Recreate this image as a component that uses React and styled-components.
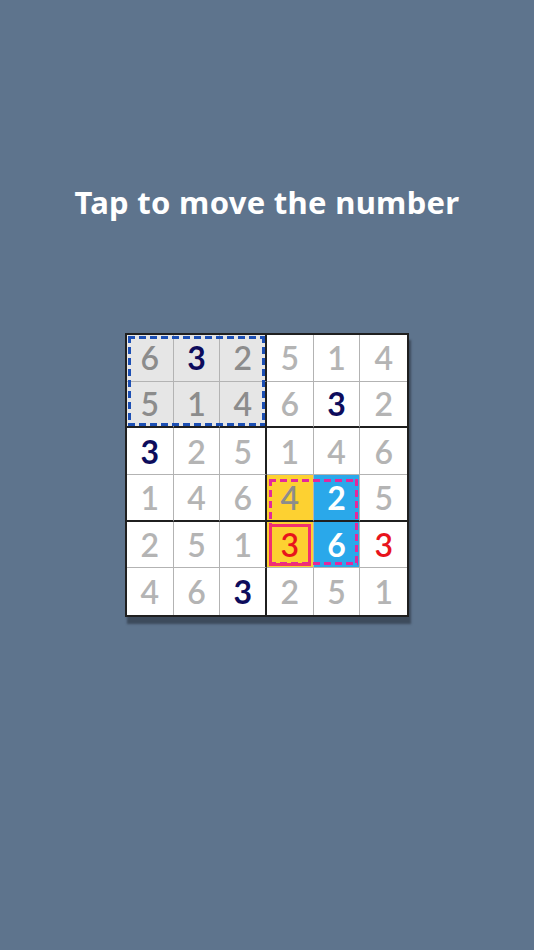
import React from "react";
import styled, { createGlobalStyle, css } from "styled-components";

const GlobalStyle = createGlobalStyle`
  html, body {
    margin: 0;
    padding: 0;
    background: #5e748d;
  }
  body {
    font-family: "Lato", "Liberation Sans", sans-serif;
  }
`;

const Page = styled.div`
  min-height: 950px;
  display: flex;
  flex-direction: column;
  align-items: center;
  padding-top: 182px;
  box-sizing: border-box;
`;

const Title = styled.h1`
  margin: 0;
  font-family: "Noto Sans", "Lato", sans-serif;
  font-weight: 700;
  font-size: 31px;
  line-height: 40px;
  color: #ffffff;
  letter-spacing: 0.3px;
`;

const Board = styled.div`
  margin-top: 111px;
  width: 284px;
  height: 284px;
  box-sizing: border-box;
  border: 2px solid #1f1f1f;
  background: #ffffff;
  display: grid;
  grid-template-columns: repeat(6, 1fr);
  grid-template-rows: repeat(6, 1fr);
  box-shadow: 2px 7px 2px rgba(35, 42, 52, 0.55);
`;

const toneColors = {
  light: "#b4b4b4",
  muted: "#8c8c8c",
  navy: "#0d0c5c",
  red: "#e8141c",
  white: "#ffffff",
};

const fills = {
  none: "#ffffff",
  shade: "#e6e6e6",
  yellow: "#fdd131",
  blue: "#2aa8ea",
};

const Cell = styled.div`
  grid-row: ${(p) => p.$row + 1};
  grid-column: ${(p) => p.$col + 1};
  box-sizing: border-box;
  display: flex;
  align-items: center;
  justify-content: center;
  font-size: 32px;
  line-height: 1;
  padding-top: 1px;
  color: ${(p) => toneColors[p.$tone]};
  font-weight: ${(p) => (p.$tone === "navy" || p.$tone === "white" ? 700 : 600)};
  background: ${(p) => fills[p.$fill]};
  border-right: ${(p) =>
    p.$col === 5 ? "none" : p.$col === 2 ? "2px solid #1f1f1f" : "1px solid #b3b3b3"};
  border-bottom: ${(p) =>
    p.$row === 5
      ? "none"
      : p.$row === 1 || p.$row === 3
      ? "2px solid #1f1f1f"
      : "1px solid #b3b3b3"};
`;

const dashed = (color) => css`
  background:
    linear-gradient(90deg, ${color} 62%, transparent 0) top left / 11px 3px repeat-x,
    linear-gradient(90deg, ${color} 62%, transparent 0) bottom left / 11px 3px repeat-x,
    linear-gradient(180deg, ${color} 62%, transparent 0) top left / 3px 11px repeat-y,
    linear-gradient(180deg, ${color} 62%, transparent 0) top right / 3px 11px repeat-y;
`;

/* Selection markers laid over the cells they span */
const Marker = styled.div`
  grid-row: ${(p) => p.$rows};
  grid-column: ${(p) => p.$cols};
  margin: ${(p) => p.$inset};
  pointer-events: none;
  z-index: 1;
  ${(p) => (p.$dashed ? dashed(p.$color) : css`border: 3px solid ${p.$color};`)}
`;

const rows = [
  [6, 3, 2, 5, 1, 4],
  [5, 1, 4, 6, 3, 2],
  [3, 2, 5, 1, 4, 6],
  [1, 4, 6, 4, 2, 5],
  [2, 5, 1, 3, 6, 3],
  [4, 6, 3, 2, 5, 1],
];

const special = {
  "0-0": ["muted", "shade"],
  "0-1": ["navy", "shade"],
  "0-2": ["muted", "shade"],
  "1-0": ["muted", "shade"],
  "1-1": ["muted", "shade"],
  "1-2": ["muted", "shade"],
  "1-4": ["navy", "none"],
  "2-0": ["navy", "none"],
  "3-3": ["muted", "yellow"],
  "3-4": ["white", "blue"],
  "4-3": ["red", "yellow"],
  "4-4": ["white", "blue"],
  "4-5": ["red", "none"],
  "5-2": ["navy", "none"],
};

export default function App() {
  return (
    <>
      <GlobalStyle />
      <Page>
        <Title>Tap to move the number</Title>
        <Board>
          {rows.map((row, r) =>
            row.map((n, c) => {
              const [tone, fill] = special[`${r}-${c}`] || ["light", "none"];
              return (
                <Cell key={`${r}-${c}`} $row={r} $col={c} $tone={tone} $fill={fill}>
                  {n}
                </Cell>
              );
            })
          )}
          <Marker $rows="1 / 3" $cols="1 / 4" $inset="1px 2px 2px 1px" $dashed $color="#1c4fb4" />
          <Marker $rows="4 / 6" $cols="4 / 6" $inset="4px 2px 3px 2px" $dashed $color="#e3289c" />
          <Marker $rows="5 / 6" $cols="4 / 5" $inset="2px 3px 2px 2px" $color="#f2306f" />
        </Board>
      </Page>
    </>
  );
}
